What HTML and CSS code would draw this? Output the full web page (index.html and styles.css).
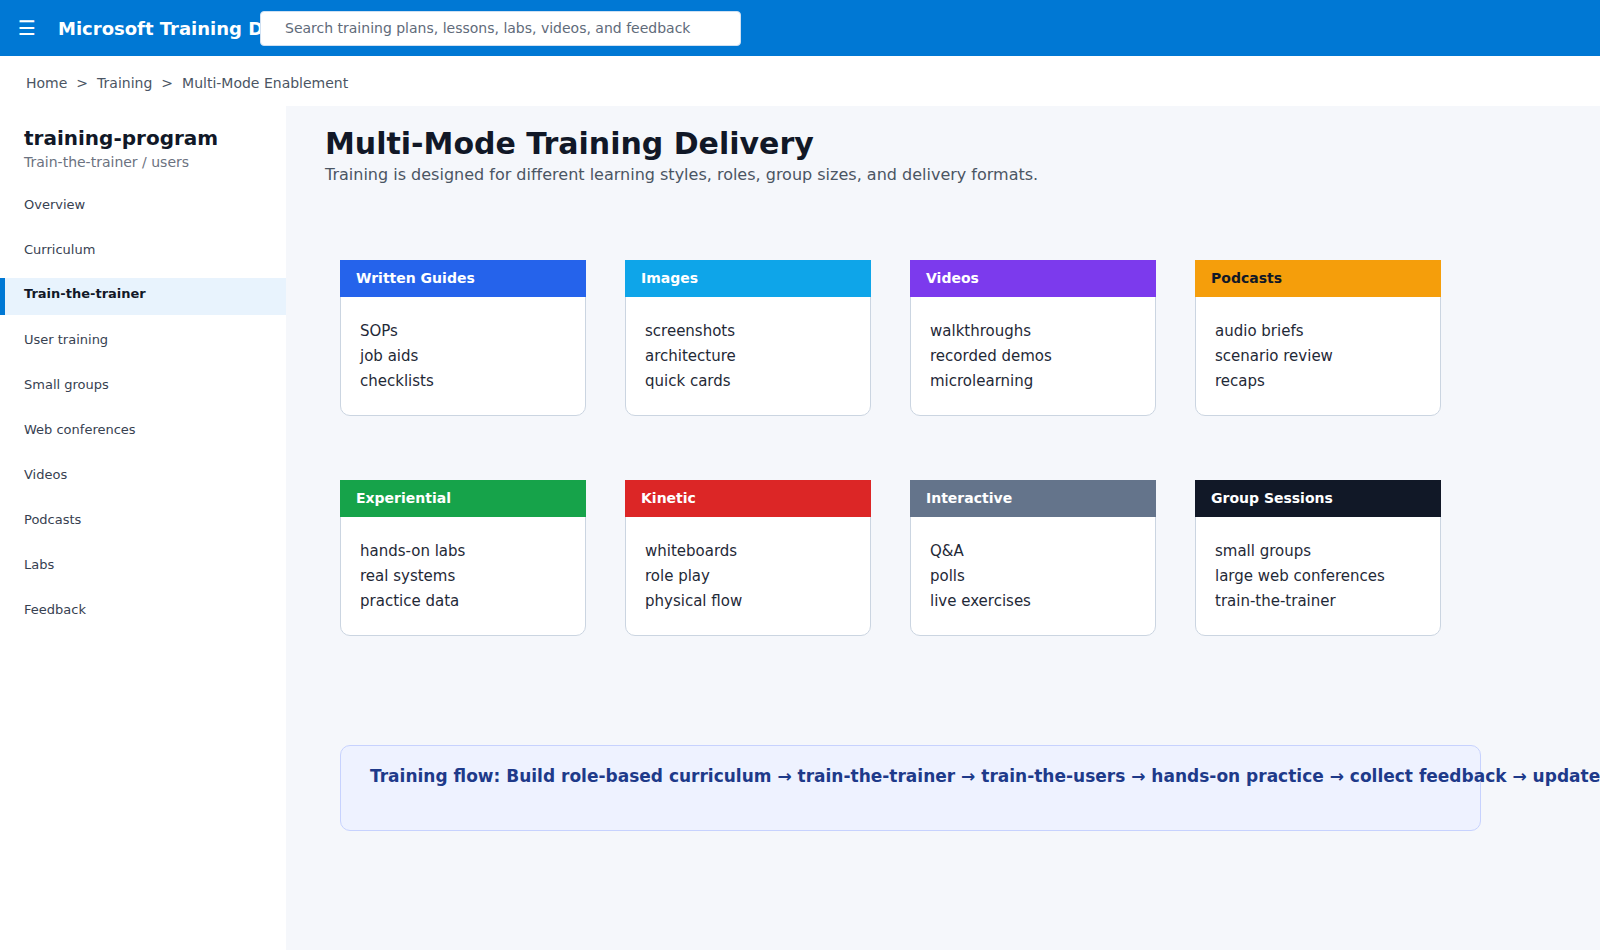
FILE: index.html
```html
<!DOCTYPE html>
<html lang="en">
<head>
<meta charset="utf-8">
<title>Multi-Mode Training Delivery</title>
<link rel="stylesheet" href="styles.css">
</head>
<body>
<header class="topbar">
  <span class="menu">☰</span>
  <span class="brand">Microsoft Training Delivery</span>
  <input class="search" type="text" placeholder="Search training plans, lessons, labs, videos, and feedback">
</header>
<nav class="crumbs"><span>Home</span><span>&gt;</span><span>Training</span><span>&gt;</span><span>Multi-Mode Enablement</span></nav>
<div class="shell">
  <aside class="side">
    <div class="side-title">training-program</div>
    <div class="side-sub">Train-the-trainer / users</div>
    <ul class="nav">
      <li>Overview</li>
      <li>Curriculum</li>
      <li class="active">Train-the-trainer</li>
      <li>User training</li>
      <li>Small groups</li>
      <li>Web conferences</li>
      <li>Videos</li>
      <li>Podcasts</li>
      <li>Labs</li>
      <li>Feedback</li>
    </ul>
  </aside>
  <main class="main">
    <h1>Multi-Mode Training Delivery</h1>
    <p class="lead">Training is designed for different learning styles, roles, group sizes, and delivery formats.</p>
    <section class="grid">
      <article class="card"><h2 class="c-blue">Written Guides</h2><ul><li>SOPs</li><li>job aids</li><li>checklists</li></ul></article>
      <article class="card"><h2 class="c-sky">Images</h2><ul><li>screenshots</li><li>architecture</li><li>quick cards</li></ul></article>
      <article class="card"><h2 class="c-purple">Videos</h2><ul><li>walkthroughs</li><li>recorded demos</li><li>microlearning</li></ul></article>
      <article class="card"><h2 class="c-amber">Podcasts</h2><ul><li>audio briefs</li><li>scenario review</li><li>recaps</li></ul></article>
      <article class="card"><h2 class="c-green">Experiential</h2><ul><li>hands-on labs</li><li>real systems</li><li>practice data</li></ul></article>
      <article class="card"><h2 class="c-red">Kinetic</h2><ul><li>whiteboards</li><li>role play</li><li>physical flow</li></ul></article>
      <article class="card"><h2 class="c-slate">Interactive</h2><ul><li>Q&amp;A</li><li>polls</li><li>live exercises</li></ul></article>
      <article class="card"><h2 class="c-ink">Group Sessions</h2><ul><li>small groups</li><li>large web conferences</li><li>train-the-trainer</li></ul></article>
    </section>
    <div class="flow">Training flow: Build role-based curriculum → train-the-trainer → train-the-users → hands-on practice → collect feedback → update materials</div>
  </main>
</div>
</body>
</html>
```
FILE: styles.css
```css
* { box-sizing: border-box; }
html, body { margin: 0; padding: 0; height: 100%; overflow: hidden; }
body { font-family: "DejaVu Sans", sans-serif; color: #111827; background: #fff; width: 1600px; height: 950px; display: flex; flex-direction: column; }
.topbar { height: 56px; flex: none; background: #0078d4; color: #fff; display: flex; align-items: center; padding-left: 18px; overflow: hidden; }
.menu { font-size: 20px; width: 40px; flex: none; }
.brand { font-size: 18px; font-weight: 700; width: 202px; flex: none; white-space: nowrap; padding-top: 1px; }
.search { width: 481px; height: 35px; flex: none; background: #fff; border: 1px solid #cfe0f2; border-radius: 4px; color: #4b5563; font-family: inherit; font-size: 14px; padding: 0 0 0 24px; outline: none; }
.search::placeholder { color: #5f6b7a; opacity: 1; }
.crumbs { height: 50px; flex: none; display: flex; align-items: center; gap: 9px; padding: 3px 0 0 26px; font-size: 14px; color: #4b5563; letter-spacing: 0; }
.shell { flex: 1; display: flex; min-height: 0; }
.side { width: 286px; flex: none; background: #fff; padding-top: 20px; }
.side-title { font-size: 20px; font-weight: 700; padding-left: 24px; line-height: 24px; }
.side-sub { font-size: 14px; color: #6b7280; padding-left: 24px; line-height: 25px; }
.nav { list-style: none; margin: 13px 0 0; padding: 0; }
.nav li { height: 37px; margin-bottom: 8px; padding-left: 24px; font-size: 13px; line-height: 33px; color: #374151; }
.nav li.active { background: #e8f3fd; border-left: 5px solid #0078d4; padding-left: 19px; font-weight: 700; color: #111827; line-height: 32px; }
.main { flex: 1; background: #f5f7fb; padding: 20px 0 0 39px; min-width: 0; }
h1 { margin: 0; font-size: 30px; line-height: 36px; color: #111827; font-weight: 700; }
.lead { margin: 1px 0 0; font-size: 16px; line-height: 24px; color: #4b5563; letter-spacing: 0.001px; }
.grid { display: grid; grid-template-columns: repeat(4, 246px); gap: 64px 39px; margin: 73px 0 0 15px; }
.card { background: #fff; border: 1px solid #cbd5e1; border-radius: 0 0 10px 10px; height: 156px; }
.card h2 { margin: -1px -1px 0; height: 37px; padding-left: 16px; font-size: 14px; line-height: 37px; font-weight: 700; color: #fff; }
.card ul { list-style: none; margin: 0; padding: 22px 0 0 19px; font-size: 15px; line-height: 25px; color: #1f2937; }
.c-blue { background: #2563eb; }
.c-sky { background: #0ea5e9; }
.c-purple { background: #7c3aed; }
.c-amber { background: #f59e0b; color: #111827 !important; }
.c-green { background: #16a34a; }
.c-red { background: #dc2626; }
.c-slate { background: #64748b; }
.c-ink { background: #111827; }
.flow { margin: 109px 0 0 15px; width: 1141px; height: 86px; background: #eef2ff; border: 1px solid #c7d2fe; border-radius: 10px; padding: 20px 29px; font-size: 17px; font-weight: 700; color: #1e3a8a; white-space: nowrap; }
```
